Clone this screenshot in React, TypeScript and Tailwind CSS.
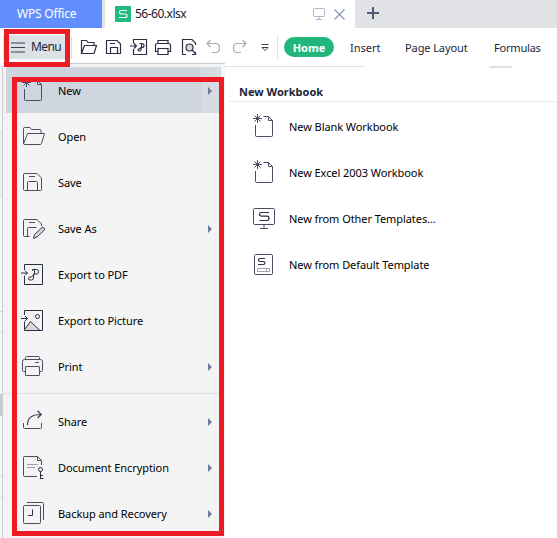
import React from "react";
import type { ReactNode } from "react";
import clsx from "clsx";

type IconProps = { children: ReactNode; className?: string };

// Menu glyphs are drawn on a 26px grid
function MenuIcon({ children, className }: IconProps) {
    return (
        <svg viewBox="0 0 26 26" className={clsx("h-[26px] w-[26px] flex-none text-[#4a4f63]", className)} fill="none" stroke="currentColor">
            {children}
        </svg>
    );
}

// Quick access glyphs are drawn on an 18px grid
function ToolIcon({ children, className }: IconProps) {
    return (
        <svg viewBox="0 0 18 18" className={clsx("h-[18px] w-[18px] flex-none text-[#293044]", className)} fill="none" stroke="currentColor" strokeWidth="1.2">
            {children}
        </svg>
    );
}

const newDoc = (
    <MenuIcon>
        <path d="M4.5 12v10.500q0 1 1 1h15q1 0 1-1V7.500l-4-4h-5M17.500 3.500v4h4" />
        <path d="M6.500 1v9M2 5.500h9M3.500 2.500l6 6M9.500 2.500l-6 6" />
    </MenuIcon>
);

const openFolder = (
    <MenuIcon>
        <path d="M3.500 21V5.500q0-1 1-1h5.500l1.500 2h8.500q1 0 1 1v3" />
        <path d="M7.500 10.500h17l-3 10q-.3 1-1.300 1H4.500q-1 0-.8-1z" />
    </MenuIcon>
);

const save = (
    <MenuIcon>
        <path d="M4.500 4.500h12.500l4.500 4.500v11.500q0 1-1 1h-16q-1 0-1-1v-15q0-1 1-1zM7.500 21v-7.500q0-1 1-1h8q1 0 1 1V21M9 7.500h6" />
    </MenuIcon>
);

const saveAs = (
    <MenuIcon>
        <path d="M9.500 21.500h-5q-1 0-1-1v-15q0-1 1-1H17l4.500 4.500v2M7.500 21v-7.500q0-1 1-1h8M9 7.500h6" />
        <path d="M13.500 23.500l1-4 7.500-7q1-.5 2 .5t.5 2l-7.500 7z" fill="#d5d7dc" stroke="#363c50" />
    </MenuIcon>
);

const exportPdf = (
    <MenuIcon className="text-[#293044]">
        <path d="M4.500 9V3.500h18v20h-18V15M1 12h6.500M5 9.500L7.500 12 5 14.500" />
        <path d="M12.500 10V8.500h4q2 0 2 2.300t-2 2.300h-3v4q0 1.900-2 1.900h-1.500q-1.500 0-1.500-1.500t1.500-1.500h1.500l3-3V8.500" />
    </MenuIcon>
);

const exportPicture = (
    <MenuIcon className="text-[#293044]">
        <path d="M5 23l5.500-8.500L20 23z" fill="#dadada" stroke="none" />
        <path d="M4.500 8V3.500h18v20h-18V14.500M1 11.500h6.500M5 9l2.500 2.500L5 14M5 22l5.500-7.500L20 23.500" />
        <circle cx="17.500" cy="9.500" r="2" />
    </MenuIcon>
);

const print = (
    <MenuIcon>
        <path d="M5.500 6.500v-2q0-1 1-1h12q1 0 1 1v2M5.500 18.500h-2q-1 0-1-1v-9q0-2 2-2h16q2 0 2 2v9q0 1-1 1h-2M15 9.500h4" />
        <rect x="5.500" y="13.500" width="14" height="9" rx=".5" />
    </MenuIcon>
);

const share = (
    <MenuIcon>
        <path d="M3.500 15v4.500q0 1 1 1h16q1 0 1-1V15" />
        <path d="M7.500 17c0-7 4-10.500 13.500-10.500M17.500 3l3.800 3.500-3.800 3.500" stroke="#363c50" strokeWidth="1.200" />
    </MenuIcon>
);

const encryption = (
    <MenuIcon>
        <path d="M17 22.500H4.500q-1 0-1-1v-18q0-1 1-1H17.500l4 4V11M17.500 2.500v4h4" />
        <path d="M7 10.500h11M7 13.500h8" stroke="#9da1ab" />
        <path d="M20.500 17.500v7.500M20.500 21.500H23M20.500 24.500h3" stroke="#293044" />
        <circle cx="20.500" cy="15.500" r="2" stroke="#293044" />
    </MenuIcon>
);

const backup = (
    <MenuIcon>
        <rect x="3.500" y="5.500" width="17" height="18" rx="1" />
        <path d="M7 2.500h15.500q1 0 1 1V20" />
        <path d="M12.500 9.500v6H8" stroke="#293044" />
    </MenuIcon>
);

const otherTemplates = (
    <MenuIcon>
        <rect x="2.500" y="3.500" width="21" height="16" rx="1" />
        <path d="M13 19.500v4M9 23.500h8" />
        <path d="M18 7.500h-7.500q-2 0-2 1.800t2 1.900h5.500q2 0 2 2.100t-2 2.200h-7.500" stroke="#293044" strokeWidth="1.200" />
    </MenuIcon>
);

const defaultTemplate = (
    <MenuIcon>
        <rect x="3.500" y="3.500" width="18" height="20" rx="1" />
        <path d="M14 7.500H9.500q-2 0-2 1.500t2 1.500h2.500q2 0 2 1.500t-2 1.500H7" stroke="#293044" strokeWidth="1.200" />
        <path d="M6.500 17.500h12v3h-12zM15.500 17.500v3" stroke="#9da1ab" />
    </MenuIcon>
);

type Item = { label: string; icon: ReactNode; arrow?: boolean; active?: boolean };

const fileItems: Item[] = [
    { label: "New", icon: newDoc, arrow: true, active: true },
    { label: "Open", icon: openFolder },
    { label: "Save", icon: save },
    { label: "Save As", icon: saveAs, arrow: true },
    { label: "Export to PDF", icon: exportPdf },
    { label: "Export to Picture", icon: exportPicture },
    { label: "Print", icon: print, arrow: true },
];

const otherItems: Item[] = [
    { label: "Share", icon: share, arrow: true },
    { label: "Document Encryption", icon: encryption, arrow: true },
    { label: "Backup and Recovery", icon: backup, arrow: true },
];

const workbookItems: Item[] = [
    { label: "New Blank Workbook", icon: newDoc },
    { label: "New Excel 2003 Workbook", icon: newDoc },
    { label: "New from Other Templates...", icon: otherTemplates },
    { label: "New from Default Template", icon: defaultTemplate },
];

function MenuRow({ item }: { item: Item }) {
    return (
        <div className={clsx("flex h-[46px] items-center pl-[14px]", item.active && "bg-[#ced5de]")}>
            {item.icon}
            <span className="ml-3 flex-1 whitespace-nowrap pt-[2px] tracking-[-0.07px] text-black">{item.label}</span>
            {item.arrow && (
                <span className={clsx("flex h-full w-5 items-center pl-[7px]", item.active && "bg-[#d7dce1]")}>
                    <svg viewBox="0 0 4 8" className="mt-[2px] h-2 w-1 fill-[#6f7d98]">
                        <path d="M0 0l4 4-4 4z" />
                    </svg>
                </span>
            )}
        </div>
    );
}

function TabBar() {
    return (
        <div className="flex h-7 bg-[#e1e2e6]">
            <div className="mr-[3px] w-[102px] bg-[#608ffd] pl-[17px] text-[12px] leading-7 tracking-[-0.2px] text-white">WPS Office</div>
            <div className="flex w-[250px] items-center bg-white pl-[10px] text-[#15192a]">
                <svg viewBox="0 0 16 16" className="h-4 w-4">
                    <rect width="16" height="16" rx="1" fill="#1fbb7d" />
                    <path d="M12 4.500H6q-1.500 0-1.500 1.700T6 8h4.500q1.500 0 1.500 1.800t-1.500 1.700H4" fill="none" stroke="white" strokeWidth="1.200" />
                </svg>
                <span className="ml-1 flex-1 text-[12px] tracking-[-0.5px]">56-60.xlsx</span>
                <svg viewBox="0 0 12 12" className="h-3 w-3" fill="none" stroke="#a9b3ca">
                    <path d="M1.500.5h9q1 0 1 1v6q0 1-1 1h-9q-1 0-1-1v-6q0-1 1-1zM6 8.500v3M3 11.500h6" />
                </svg>
                <svg viewBox="0 0 11 11" className="ml-[9px] mr-[10px] h-[11px] w-[11px]" stroke="#8593b2" strokeWidth="1.100">
                    <path d="M.5.5l10 10M10.500.5l-10 10" />
                </svg>
            </div>
            <svg viewBox="0 0 12 12" className="ml-3 mt-[7px] h-3 w-3" stroke="#4d5b79" strokeWidth="2">
                <path d="M6 0v12M0 6h12" />
            </svg>
        </div>
    );
}

function Toolbar() {
    return (
        <div className="flex h-[38px] items-center text-[#20263a]">
            <div className="ml-[3px] flex h-6 w-[62px] items-center bg-[#dce1e6] pl-2">
                <svg viewBox="0 0 14 11" className="h-[11px] w-[14px]" stroke="#3a4053">
                    <path d="M0 1h14M0 5.500h14M0 10h14" />
                </svg>
                <span className="ml-[6px] text-[12px] tracking-[-0.6px]">Menu</span>
            </div>
            <div className="ml-[6px] h-6 w-px bg-[#e0e1e5]" />
            <ToolIcon className="ml-2">
                <path d="M1.500 15.500v-13h5l1.500 2h6v3M4.500 7.500h12l-2.500 8H1.500z" />
            </ToolIcon>
            <ToolIcon className="ml-[7px]">
                <path d="M1.500 2.500h10.500l3.500 3.500v9.500h-14zM5.500 15V9.500h7V15M5 5.500h5" />
            </ToolIcon>
            <ToolIcon className="ml-[7px]">
                <path d="M3.500 5.500v-4h13v15h-13V11M0 8h6M4 5.500L6.500 8 4 10.500" />
                <path d="M9.500 5.500h2.500q2 0 2 2t-2 2h-1v2q0 1.500-1.500 1.500-1.500 0-1.500-1t1.500-1.200l2-1.500V5.500" />
            </ToolIcon>
            <ToolIcon className="ml-[6px]">
                <path d="M4 5.500v-3h10v3M4 13.500H1.500v-6q0-2 2-2h11q2 0 2 2v6H14M4 10.500h10v6H4z" />
            </ToolIcon>
            <ToolIcon className="ml-[8px]">
                <path d="M6 16.500H2.500v-15h9.500l3.500 3.500v2M15.500 14v2.500H12" />
                <circle cx="9.500" cy="9.500" r="3.500" fill="#d5d8e0" />
                <path d="M12 12l4 4" />
            </ToolIcon>
            <ToolIcon className="ml-[7px] text-[#a7a9b0]">
                <path d="M5.500 2L2 5.500 5.500 9M2 5.500h8.500q4 0 4 4.500t-4 4.500H7" />
            </ToolIcon>
            <ToolIcon className="ml-[8px] text-[#a7a9b0]">
                <path d="M11.500 2L15 5.500 11.500 9M15 5.500H6.500q-4 0-4 4.500t4 4.500H10" />
            </ToolIcon>
            <svg viewBox="0 0 8 8" className="ml-[12px] mt-[2px] h-2 w-2" fill="none" stroke="#3a4053">
                <path d="M.5.5h7M1 3.500h6L4 6.500z" />
            </svg>
            <div className="ml-2 h-6 w-px bg-[#e0e1e5]" />
            <div className="ml-[6px] h-5 w-[50px] rounded-full bg-[#21b77c] text-center text-[11px] font-bold leading-[21px] text-white">Home</div>
            <span className="ml-4 w-[55px] pt-[2px]">Insert</span>
            <span className="w-[89px] whitespace-nowrap pt-[2px] tracking-[-0.1px]">Page Layout</span>
            <span className="pt-[2px] tracking-[-0.2px]">Formulas</span>
        </div>
    );
}

export default function App() {
    return (
        <div className="relative flex h-[538px] w-[557px] flex-col overflow-hidden bg-white font-['Noto_Sans','Open_Sans',sans-serif] text-[11px]">
            <TabBar />
            <Toolbar />
            <div className="flex flex-1">
                {/* Sheet edge visible beside the menu */}
                <div className="flex w-[3px] flex-col border-r border-[#c9cbd0] bg-[#f7f7f8]">
                    <div className="h-[67px] border-b border-[#d5d7dd]" />
                    <div className="h-[63px] border-b border-[#d5d7dd] bg-[#f1f2f5]" />
                    <div className="h-[116px] border-b border-[#d5d7dd]" />
                    <div className="h-[21px] border-b border-[#d5d7dd]" />
                    <div className="h-[61px]" />
                    <div className="h-[22px] bg-[#c8cad1]" />
                    <div className="h-[61px] border-b border-[#d5d7dd]" />
                    <div className="h-[21px] border-b border-[#d5d7dd]" />
                </div>
                <div className="z-10 -mt-[3px] w-[222px] border-t border-[#cccdd1] bg-[#f4f4f4] pl-[3px] pr-1 pt-[3px]">
                    {fileItems.map(item => <MenuRow key={item.label} item={item} />)}
                    <div className="-ml-[3px] flex h-[9px] items-center">
                        <div className="h-px flex-1 bg-[#dfe0e5]" />
                    </div>
                    {otherItems.map(item => <MenuRow key={item.label} item={item} />)}
                </div>
                <div className="flex flex-1 flex-col">
                    {/* Top edge of the ribbon */}
                    <div className="flex h-[2px]">
                        <div className="h-px w-[140px] bg-[#e0e1e5]" />
                        <div className="ml-[124px] h-[2px] w-6 rounded-t bg-[#dde2e7]" />
                    </div>
                    <div className="ml-1 h-[34px] border-b border-[#e8e9ec] pl-[10px] pt-[15px] text-[11px] font-bold leading-[17px] text-[#20263a]">New Workbook</div>
                    <div className="mt-px pl-3">
                        {workbookItems.map(item => <MenuRow key={item.label} item={item} />)}
                    </div>
                </div>
            </div>

            {/* Highlight frames */}
            <div className="absolute left-1 top-[29px] z-20 h-[38px] w-[66px] border-[5px] border-[#ed1c24]" />
            <div className="absolute left-3 top-[77px] z-20 h-[459px] w-[212px] border-[5px] border-[#ed1c24]" />
        </div>
    );
}
